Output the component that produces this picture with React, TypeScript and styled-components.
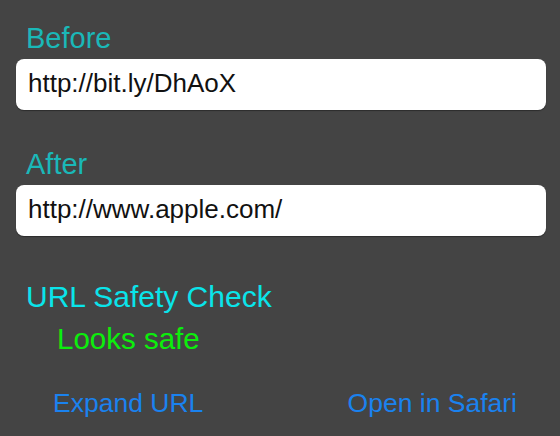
import React from "react";
import styled, { createGlobalStyle } from "styled-components";

const GlobalStyle = createGlobalStyle`
  html, body {
    margin: 0;
    padding: 0;
    background: #444444;
  }
  body {
    font-family: "Liberation Sans", Arial, Helvetica, sans-serif;
  }
`;

const Screen = styled.div`
  width: 560px;
  height: 436px;
  box-sizing: border-box;
  background: #444444;
  padding: 22px 14px 0 16px;
  display: flex;
  flex-direction: column;
  overflow: hidden;
`;

const Section = styled.div<{ $top?: number }>`
  display: flex;
  flex-direction: column;
  margin-top: ${(p) => p.$top ?? 0}px;
`;

const FieldLabel = styled.div`
  font-size: 29px;
  line-height: 32px;
  color: #1ab8b8;
  padding-left: 10px;
  margin-bottom: 5px;
`;

const UrlField = styled.div`
  height: 51px;
  box-sizing: border-box;
  background: #ffffff;
  border-radius: 8px;
  box-shadow: 0 1px 1px rgba(0, 0, 0, 0.35);
  display: flex;
  align-items: center;
  padding: 0 12px 3px 12px;
  font-size: 26px;
  color: #111111;
`;

const CheckTitle = styled.div`
  margin-top: 45px;
  padding-left: 10px;
  font-size: 30px;
  line-height: 32px;
  color: #0ae4ea;
`;

const CheckResult = styled.div<{ $safe: boolean }>`
  margin-top: 10px;
  padding-left: 41px;
  font-size: 29.5px;
  line-height: 32px;
  color: ${(p) => (p.$safe ? "#0cee0c" : "#ff3b30")};
`;

const ActionBar = styled.div`
  margin-top: 32px;
  display: flex;
  justify-content: space-between;
  padding: 0 29px 0 37px;
`;

const ActionButton = styled.button`
  background: none;
  border: none;
  padding: 0;
  font-family: inherit;
  font-size: 26.5px;
  line-height: 32px;
  color: #1a82ef;
  cursor: pointer;
`;

const App: React.FC = () => {
  const before = "http://bit.ly/DhAoX";
  const after = "http://www.apple.com/";

  return (
    <>
      <GlobalStyle />
      <Screen>
        <Section>
          <FieldLabel>Before</FieldLabel>
          <UrlField>{before}</UrlField>
        </Section>
        <Section $top={38}>
          <FieldLabel>After</FieldLabel>
          <UrlField>{after}</UrlField>
        </Section>
        <CheckTitle>URL Safety Check</CheckTitle>
        <CheckResult $safe>Looks safe</CheckResult>
        <ActionBar>
          <ActionButton>Expand URL</ActionButton>
          <ActionButton>Open in Safari</ActionButton>
        </ActionBar>
      </Screen>
    </>
  );
};

export default App;
